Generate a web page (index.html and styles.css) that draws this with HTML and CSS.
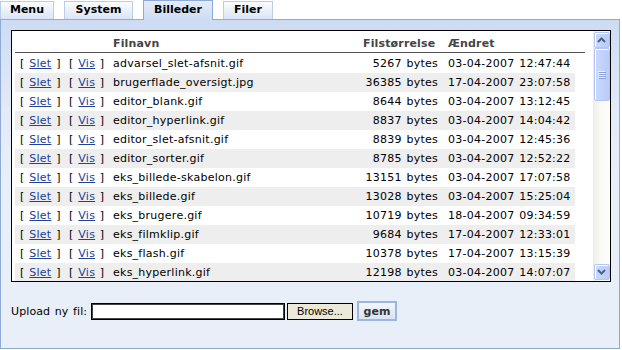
FILE: index.html
```html
<!DOCTYPE html>
<html lang="da">
<head>
  <meta charset="UTF-8" />
  <title>Billeder</title>
  <link rel="stylesheet" href="styles.css">
</head>
<body>
  <div class="tabs">
    <a href="#" class="tab tab-menu">Menu</a>
    <a href="#" class="tab tab-system">System</a>
    <a href="#" class="tab tab-billeder active">Billeder</a>
    <a href="#" class="tab tab-filer">Filer</a>
  </div>

  <div class="panel">
    <div class="files">
      <div class="list">
        <div class="file-head">
          <span></span><span></span>
          <span>Filnavn</span>
          <span>Filstørrelse</span>
          <span>Ændret</span>
        </div>
        <div class="rows">
          <div class="file-row"><span>[ <a href="#">Slet</a> ]</span><span>[ <a href="#">Vis</a> ]</span><span>advarsel_slet-afsnit.gif</span><span class="size">5267 bytes</span><span>03-04-2007 12:47:44</span></div>
          <div class="file-row"><span>[ <a href="#">Slet</a> ]</span><span>[ <a href="#">Vis</a> ]</span><span>brugerflade_oversigt.jpg</span><span class="size">36385 bytes</span><span>17-04-2007 23:07:58</span></div>
          <div class="file-row"><span>[ <a href="#">Slet</a> ]</span><span>[ <a href="#">Vis</a> ]</span><span>editor_blank.gif</span><span class="size">8644 bytes</span><span>03-04-2007 13:12:45</span></div>
          <div class="file-row"><span>[ <a href="#">Slet</a> ]</span><span>[ <a href="#">Vis</a> ]</span><span>editor_hyperlink.gif</span><span class="size">8837 bytes</span><span>03-04-2007 14:04:42</span></div>
          <div class="file-row"><span>[ <a href="#">Slet</a> ]</span><span>[ <a href="#">Vis</a> ]</span><span>editor_slet-afsnit.gif</span><span class="size">8839 bytes</span><span>03-04-2007 12:45:36</span></div>
          <div class="file-row"><span>[ <a href="#">Slet</a> ]</span><span>[ <a href="#">Vis</a> ]</span><span>editor_sorter.gif</span><span class="size">8785 bytes</span><span>03-04-2007 12:52:22</span></div>
          <div class="file-row"><span>[ <a href="#">Slet</a> ]</span><span>[ <a href="#">Vis</a> ]</span><span>eks_billede-skabelon.gif</span><span class="size">13151 bytes</span><span>03-04-2007 17:07:58</span></div>
          <div class="file-row"><span>[ <a href="#">Slet</a> ]</span><span>[ <a href="#">Vis</a> ]</span><span>eks_billede.gif</span><span class="size">13028 bytes</span><span>03-04-2007 15:25:04</span></div>
          <div class="file-row"><span>[ <a href="#">Slet</a> ]</span><span>[ <a href="#">Vis</a> ]</span><span>eks_brugere.gif</span><span class="size">10719 bytes</span><span>18-04-2007 09:34:59</span></div>
          <div class="file-row"><span>[ <a href="#">Slet</a> ]</span><span>[ <a href="#">Vis</a> ]</span><span>eks_filmklip.gif</span><span class="size">9684 bytes</span><span>17-04-2007 12:33:01</span></div>
          <div class="file-row"><span>[ <a href="#">Slet</a> ]</span><span>[ <a href="#">Vis</a> ]</span><span>eks_flash.gif</span><span class="size">10378 bytes</span><span>17-04-2007 13:15:39</span></div>
          <div class="file-row"><span>[ <a href="#">Slet</a> ]</span><span>[ <a href="#">Vis</a> ]</span><span>eks_hyperlink.gif</span><span class="size">12198 bytes</span><span>03-04-2007 14:07:07</span></div>
        </div>
      </div>

      <!-- scrollbar (XP look) -->
      <div class="scrollbar">
        <div class="sb-btn">
          <svg width="14" height="14" viewBox="0 0 14 14"><polyline points="3,9 6.5,5.5 10,9" fill="none" stroke="#4d6185" stroke-width="2"/></svg>
        </div>
        <div class="sb-thumb">
          <svg width="8" height="8" viewBox="0 0 8 8">
            <path d="M0 0.5h7M0 2.5h7M0 4.5h7M0 6.5h7" stroke="#eef3ff" stroke-width="1"/>
            <path d="M1 1.5h7M1 3.5h7M1 5.5h7M1 7.5h7" stroke="#8c9fd6" stroke-width="1"/>
          </svg>
        </div>
        <div class="sb-track"></div>
        <div class="sb-btn">
          <svg width="14" height="14" viewBox="0 0 14 14"><polyline points="3,5 6.5,8.5 10,5" fill="none" stroke="#4d6185" stroke-width="2"/></svg>
        </div>
      </div>
    </div>

    <form class="upload" onsubmit="return false">
      <label class="upload-label" for="fil">Upload ny fil:</label>
      <input type="text" id="fil" class="file-input" />
      <button type="button" class="browse">Browse...</button>
      <button type="submit" class="gem">gem</button>
    </form>
  </div>
</body>
</html>
```

FILE: styles.css
```css
  body {
    margin: 0;
    font-family: "DejaVu Sans", Verdana, sans-serif;
    font-size: 11px;
    color: #000;
    background: #fff;
  }

  /* faner */
  .tabs {
    display: flex;
    gap: 10px;
    width: 620px;
    height: 19px;
    border-bottom: 1px solid #8eaad6;
  }

  .tab {
    box-sizing: border-box;
    height: 18px;
    margin-top: 1px;
    border: 1px solid #bccde8;
    border-bottom: none;
    background: linear-gradient(#fafcff, #dbe5f6);
    color: #000;
    font-weight: bold;
    line-height: 16px;
    text-align: center;
    text-decoration: none;
  }

  .tab.active {
    height: 20px;
    margin-top: 0;
    padding-top: 1px;
    border-color: #8eaad6;
    background: linear-gradient(#e4ecf9, #cddcf3);
  }

  .tab-menu { width: 54px; }
  .tab-system { width: 69px; }
  .tab-billeder { width: 70px; }
  .tab-filer { width: 50px; }

  .panel {
    box-sizing: border-box;
    width: 620px;
    height: 329px;
    padding: 10px 0 0 10px;
    border: 1px solid #8eaad6;
    border-top: none;
    background: linear-gradient(#cddcf3 0, #e3eaf8 90px, #e9eff9 160px, #e9eff9);
  }

  /* filliste */
  .files {
    display: flex;
    box-sizing: border-box;
    width: 600px;
    height: 252px;
    border: 1px solid #000;
    background: #fff;
  }

  .list {
    flex: 1;
    overflow: hidden;
    padding-left: 3px;
    letter-spacing: 0.25px;
    word-spacing: 1px;
  }

  .file-head,
  .file-row {
    display: grid;
    grid-template-columns: 49px 44px 250px 85px 132px;
  }

  .file-head {
    width: 570px;
    grid-template-columns: 49px 44px 250px 85px 132px 10px;
    padding-top: 4px;
    line-height: 17px;
    border-bottom: 1px solid #555;
    margin-bottom: 1px;
    font-weight: bold;
    color: #444;
    letter-spacing: 0.15px;
  }

  .file-row {
    width: 560px;
    height: 19px;
    line-height: 19px;
  }

  .file-head span,
  .file-row span {
    padding: 0 5px;
    white-space: nowrap;
  }

  .rows .file-row:nth-child(even) {
    background: #eeeeee;
  }

  .file-row a {
    color: #21409a;
  }

  .file-row .size {
    text-align: right;
  }

  /* scrollbar */
  .scrollbar {
    display: flex;
    flex-direction: column;
    width: 17px;
    padding: 1px 0 1px 1px;
    box-sizing: border-box;
    background: linear-gradient(to right, #eeede5, #fbfbf8 50%, #fdfdfa);
  }

  .sb-btn,
  .sb-thumb {
    box-sizing: border-box;
    width: 16px;
    border: 1px solid #b3c6f5;
    border-radius: 2px;
    box-shadow: inset 1px 1px 0 #fff;
    background: linear-gradient(to right, #cad9fd, #b9ccf8);
    display: flex;
    align-items: center;
    justify-content: center;
  }

  .sb-btn {
    height: 16px;
  }

  .sb-thumb {
    height: 53px;
  }

  .sb-track {
    flex: 1;
  }

  /* upload */
  .upload {
    display: flex;
    align-items: center;
    height: 20px;
    margin-top: 19px;
  }

  .upload-label {
    width: 80px;
    flex-shrink: 0;
    letter-spacing: 0.1px;
    word-spacing: 1px;
  }

  .file-input {
    box-sizing: border-box;
    width: 194px;
    height: 17px;
    margin: 0;
    padding: 0 2px;
    border: 1px solid #000;
    box-shadow: inset 0 0 0 1px #444;
    background: #fff;
  }

  .browse {
    box-sizing: border-box;
    width: 66px;
    height: 17px;
    margin: 0 0 0 2px;
    padding: 0;
    border: 1px solid #000;
    background: #ece9d8;
    font-family: "Liberation Sans", Arial, sans-serif;
    font-size: 11px;
    color: #000;
  }

  .gem {
    box-sizing: border-box;
    width: 40px;
    height: 20px;
    margin: 0 0 0 4px;
    padding: 0;
    border: 2px solid #9cb6e0;
    background: linear-gradient(#f3f6fc, #d9e3f4);
    font-family: "DejaVu Sans", Verdana, sans-serif;
    font-size: 11px;
    font-weight: bold;
    color: #333;
  }
```
